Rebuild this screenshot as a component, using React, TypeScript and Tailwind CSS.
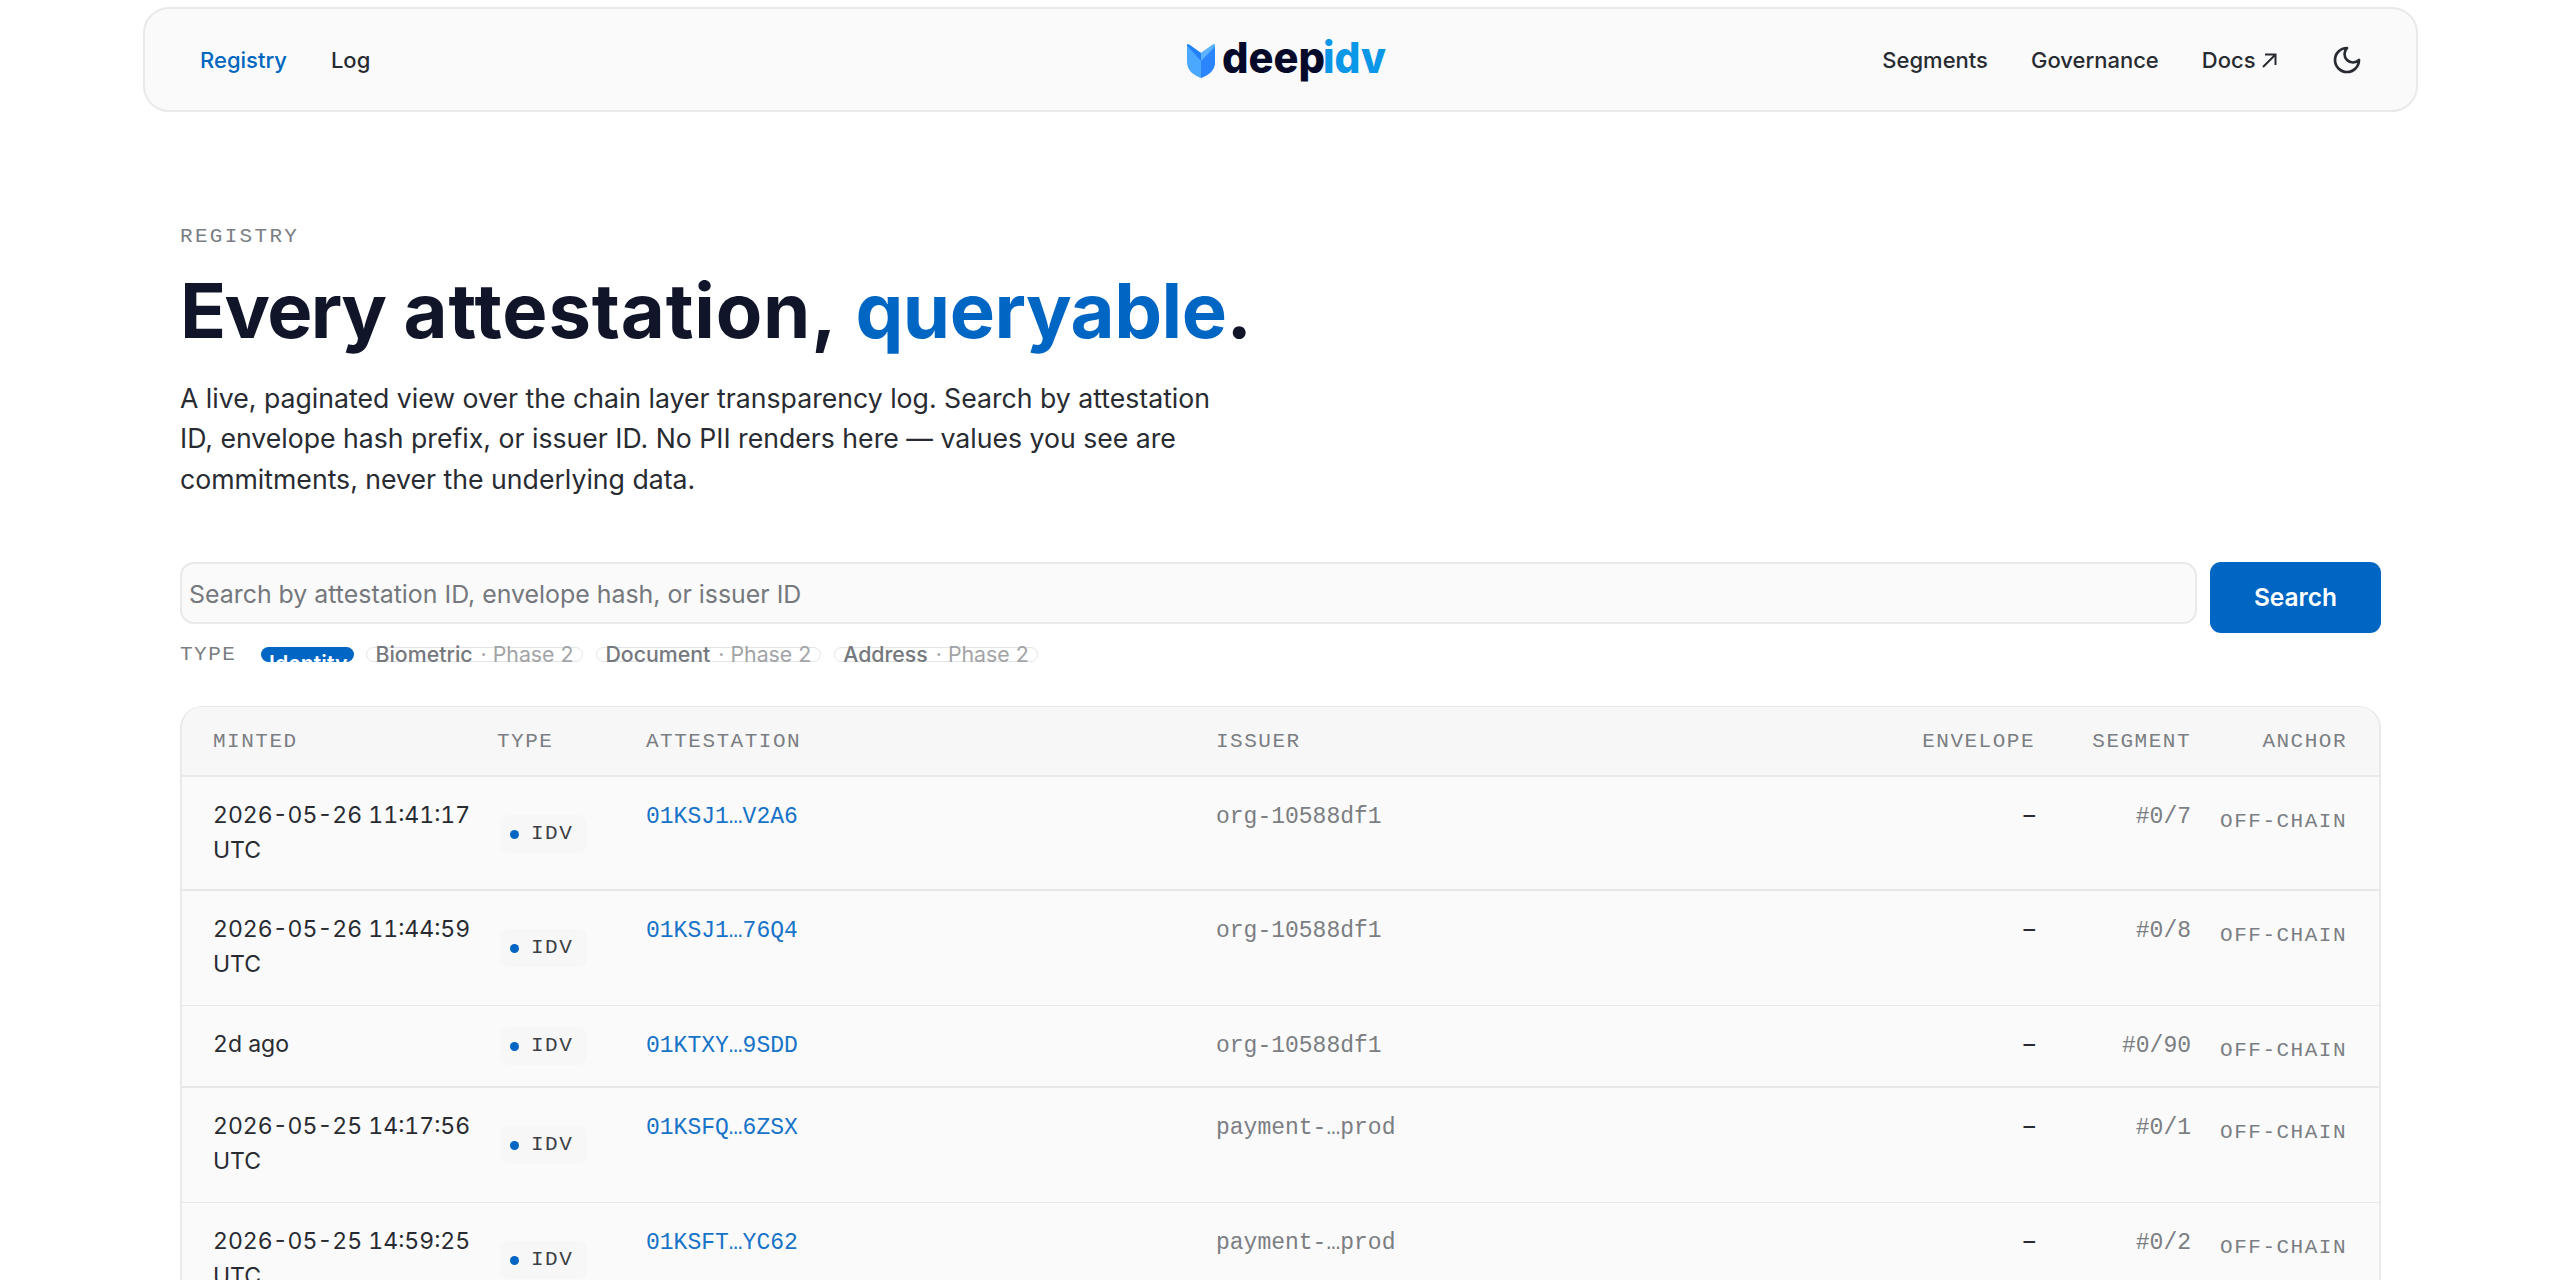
import { useState } from 'react'

const NAV_LEFT = ['Registry', 'Log']

const FILTERS = ['Biometric', 'Document', 'Address']

const ROWS = [
  { minted: '2026-05-26 11:41:17 UTC', id: '01KSJ1…V2A6', issuer: 'org-10588df1', segment: '#0/7', size: 'h-[114px] border-b-2' },
  { minted: '2026-05-26 11:44:59 UTC', id: '01KSJ1…76Q4', issuer: 'org-10588df1', segment: '#0/8', size: 'h-[115px] border-b' },
  { minted: '2d ago', id: '01KTXY…9SDD', issuer: 'org-10588df1', segment: '#0/90', size: 'h-[82px] border-b-2' },
  { minted: '2026-05-25 14:17:56 UTC', id: '01KSFQ…6ZSX', issuer: 'payment-…prod', segment: '#0/1', size: 'h-[115px] border-b' },
  { minted: '2026-05-25 14:59:25 UTC', id: '01KSFT…YC62', issuer: 'payment-…prod', segment: '#0/2', size: 'h-[115px] border-b' },
]

const COLS = 'grid grid-cols-[284px_149px_570px_819px_156px_156px] pl-[31px]'
const MONO = "font-['Liberation_Mono',monospace]"
const LABEL = "font-['Liberation_Mono',monospace] text-[21px] leading-[30px] text-[#7b7e82]"

function Logo() {
  return (
    <svg className="ml-[12px] mt-[9px]" width="202" height="60" viewBox="0 -6 202 60" aria-label="deepidv">
      <path d="M1 5.5 Q1 3.5 3 4.5 L15 13 L27 4.5 Q29 3.5 29 5.5 L29 22 C29 30 23 35 15 38 C7 35 1 30 1 22 Z" fill="#4aa8ff" />
      <path d="M15 21 L29 7 L29 22 C29 30 23 35 15 38 Z" fill="#2b85ff" />
      <path d="M1 5.5 Q1 3.5 3 4.5 L15 13 L15 21 Z" fill="#2382fb" />
      <path d="M29 5.5 Q29 3.5 27 4.5 L15 13 L15 21 Z" fill="#5cb2ff" />
      <text x="36" y="33" textLength="103" lengthAdjust="spacingAndGlyphs" className="font-['Inter',sans-serif] text-[43px] font-extrabold" fill="#050a2a">deep</text>
      <text x="137" y="33" textLength="63" lengthAdjust="spacingAndGlyphs" className="font-['Inter',sans-serif] text-[43px] font-extrabold" fill="#0a97e8">idv</text>
    </svg>
  )
}

function Header() {
  return (
    <header className="mx-auto mt-[7px] grid h-[105px] w-[2275px] grid-cols-[1fr_auto_1fr] items-center rounded-[26px] border-2 border-[#e8e9ea] bg-[#fafafa] pl-[55.5px] pr-[53px] text-[22px] font-medium text-[#282b31]">
      <nav className="flex gap-11 pt-0.5">
        {NAV_LEFT.map((item) => (
          <a key={item} className={item === 'Registry' ? 'text-[#0066c0]' : ''}>{item}</a>
        ))}
      </nav>
      <Logo />
      <nav className="flex items-center justify-end">
        <a className="mr-[43px] pt-0.5">Segments</a>
        <a className="mr-[43px] pt-0.5">Governance</a>
        <a className="flex items-center gap-1.5 pt-0.5">
          Docs
          <svg width="15" height="15" viewBox="0 0 15 15" fill="none" stroke="currentColor" strokeWidth="2">
            <path d="M1 14 L13.5 1.5 M3 1.5 H13.5 V12" />
          </svg>
        </a>
        <svg className="ml-[54px]" width="32" height="32" viewBox="0 0 24 24" fill="none" stroke="currentColor" strokeWidth="2" strokeLinecap="round" strokeLinejoin="round">
          <path d="M12 3a6 6 0 0 0 9 9 9 9 0 1 1-9-9Z" />
        </svg>
      </nav>
    </header>
  )
}

function SearchBar() {
  const [query, setQuery] = useState('')

  return (
    <form className="flex items-start gap-[13px]" onSubmit={(e) => e.preventDefault()}>
      <input
        value={query}
        onChange={(e) => setQuery(e.target.value)}
        placeholder="Search by attestation ID, envelope hash, or issuer ID"
        className="h-[62px] flex-1 rounded-[14px] border-2 border-[#e8e9ea] bg-[#fafafa] px-[7px] pt-0.5 text-[24.9px] placeholder:text-[#75787d]"
      />
      <button className="h-[71px] w-[171px] rounded-[11px] bg-[#0066c4] text-[24.5px] font-semibold text-white">Search</button>
    </form>
  )
}

function TypeFilters() {
  return (
    <div className="mt-[14px] flex h-[15px] items-center">
      <span className={`${LABEL} w-[81px] pt-0.5 tracking-[1.5px]`}>TYPE</span>
      <button className="mr-3 flex h-[15px] w-[93px] items-start overflow-hidden rounded-full bg-[#0066c4] pl-2 text-[21.3px] font-semibold leading-[32px] text-white">
        Identity
      </button>
      {FILTERS.map((name) => (
        <span key={name} className="mr-[13px] flex h-[15px] items-center gap-2 whitespace-nowrap rounded-full border border-[#e3e4e6] px-[8.5px] text-[21.3px] font-medium text-[#75787d]">
          {name}
          <span className="font-normal text-[#a2a4a7]">· Phase 2</span>
        </span>
      ))}
    </div>
  )
}

function RegistryTable() {
  return (
    <section className="mt-11 overflow-hidden rounded-t-[22px] border-x-2 border-t border-[#e8e9ea] bg-[#fafafa]">
      <div className={`${COLS} ${LABEL} h-[70px] items-center border-b-2 border-[#e8e9ea] bg-[#f7f7f8] pt-[3px] tracking-[1.5px]`}>
        <span>MINTED</span>
        <span>TYPE</span>
        <span>ATTESTATION</span>
        <span className="flex justify-between">
          <span>ISSUER</span>
          <span>ENVELOPE</span>
        </span>
        <span className="text-right">SEGMENT</span>
        <span className="text-right">ANCHOR</span>
      </div>
      {ROWS.map((row) => (
        <div key={row.id} className={`${COLS} ${row.size} border-[#e6e7e8] pt-[21.5px] text-[23px] leading-[34.5px] text-[#282b31]`}>
          <span className="w-[270px] tabular-nums">{row.minted}</span>
          <span className={row.minted === '2d ago' ? 'pt-0' : 'pt-[17px]'}>
            <span className={`${MONO} ml-[3px] flex h-[38px] w-[87px] items-center gap-[12px] rounded-lg bg-[#f7f7f8] pl-[10px] text-[21px] tracking-[1.5px] text-[#3c3f45]`}>
              <i className="size-[9px] rounded-full bg-[#0066c4]" />
              IDV
            </span>
          </span>
          <a className={`${MONO} pt-[1.5px] text-[#1673c8]`}>{row.id}</a>
          <span className="flex justify-between">
            <span className={`${MONO} pt-[1.5px] text-[#7b7e82]`}>{row.issuer}</span>
            <span>–</span>
          </span>
          <span className={`${MONO} pt-[1.5px] text-right text-[#7b7e82]`}>{row.segment}</span>
          <span className={`${LABEL} pt-[8.5px] text-right tracking-[1.5px]`}>OFF-CHAIN</span>
        </div>
      ))}
    </section>
  )
}

export default function App() {
  return (
    <div className="flow-root h-[1280px] overflow-hidden bg-white font-['Inter',sans-serif]">
      <Header />
      <main className="ml-[180px] w-[2201px]">
        <p className={`${LABEL} mt-[110px] tracking-[2.3px]`}>REGISTRY</p>
        <h1 className="mt-[13px] whitespace-nowrap text-[76px] font-bold leading-[90px] text-[#11152a]">
          <span className="tracking-[-1.6px]">Every</span> <span className="tracking-[0.8px]">attestation,</span>{' '}
          <span className="tracking-[-0.5px] text-[#0066c4]">queryable</span>.
        </h1>
        <p className="mb-[63.1px] mt-[23px] w-[1060px] text-[26.65px] leading-[40.3px] text-[#282b31]">
          A live, paginated view over the chain layer transparency log. Search by attestation ID, envelope hash
          prefix, or issuer ID. No PII renders here — values you see are commitments, never the underlying data.
        </p>
        <SearchBar />
        <TypeFilters />
        <RegistryTable />
      </main>
    </div>
  )
}
